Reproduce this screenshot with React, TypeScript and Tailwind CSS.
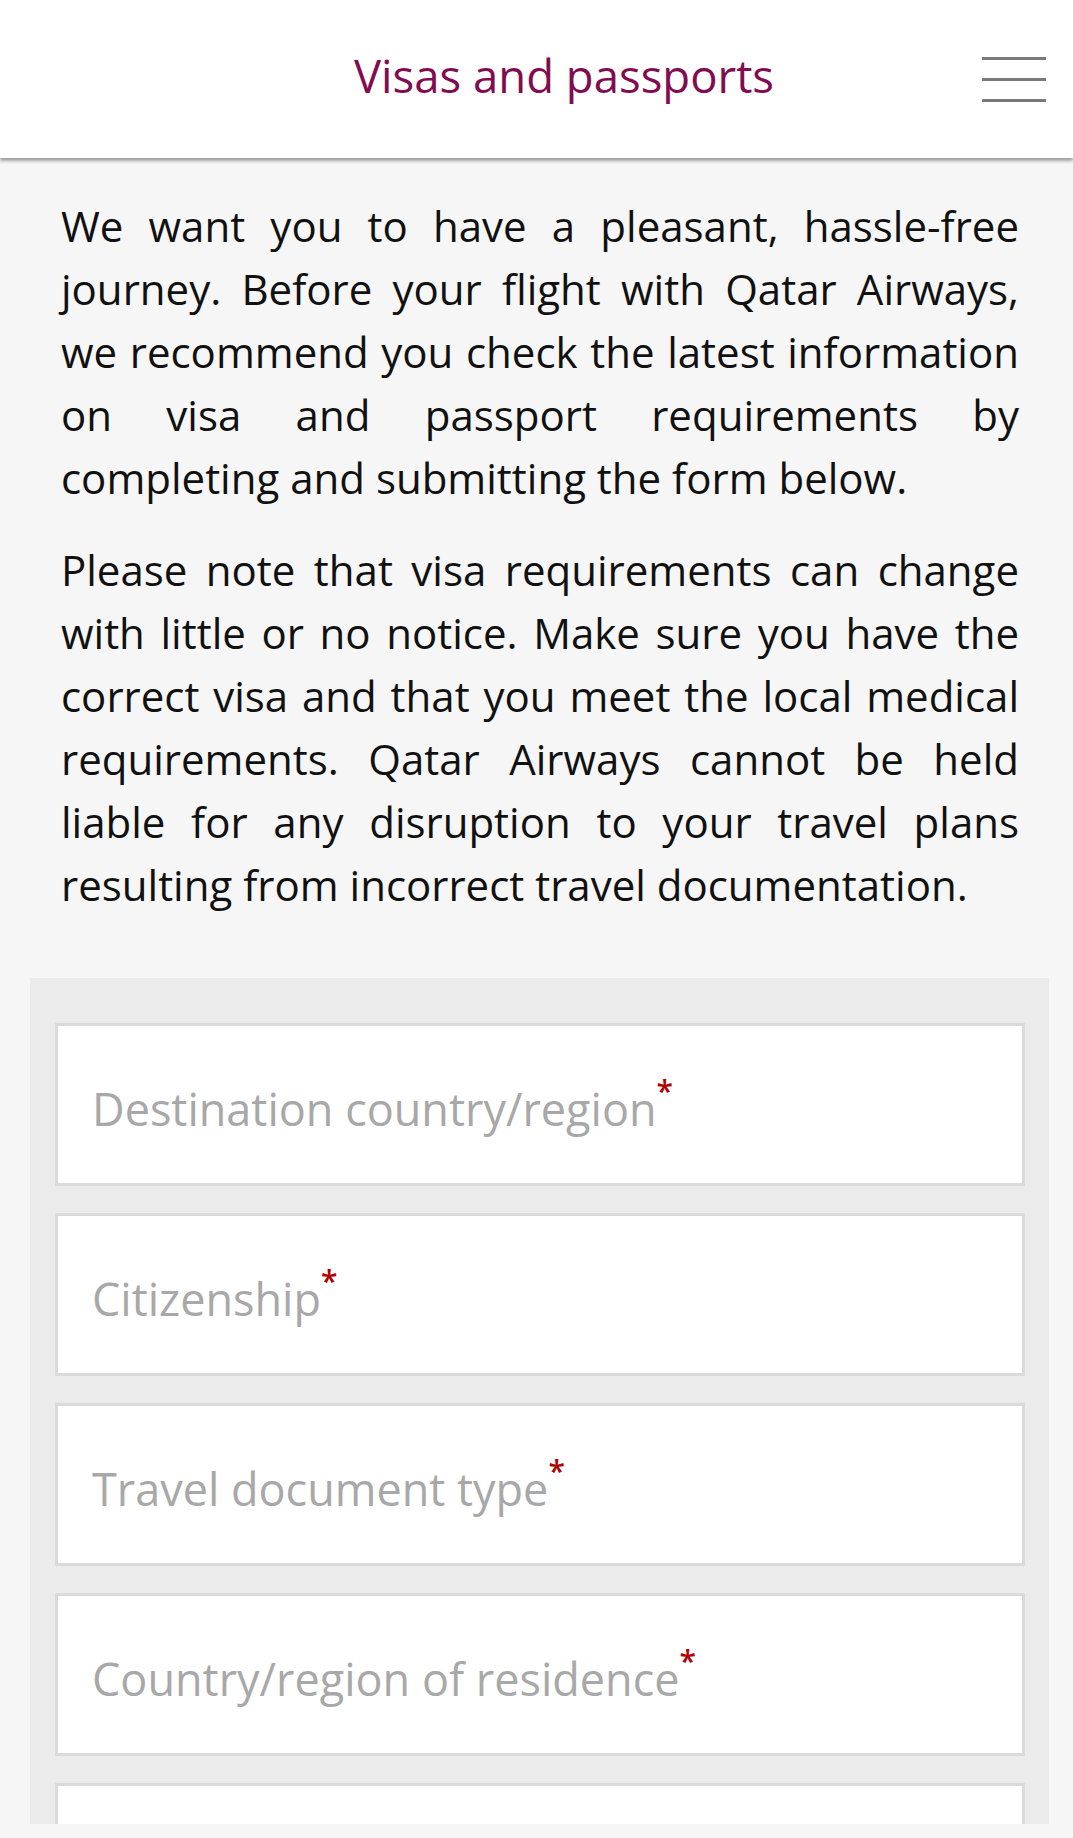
const fields = [
  "Destination country/region",
  "Citizenship",
  "Travel document type",
  "Country/region of residence",
  "",
];

export default function App() {
  return (
    <div className="w-[1073px] h-[1838px] bg-[#f6f6f6] flex flex-col overflow-hidden font-['Open_Sans',sans-serif]">
      {/* Header */}
      <header className="relative z-10 h-[158px] shrink-0 bg-white flex items-center shadow-[0_3px_3px_rgba(0,0,0,0.35)]">
        <h1 className="flex-1 pl-[146px] pb-[8px] text-center text-[45.5px] font-medium text-[#820c50]">
          Visas and passports
        </h1>
        <button className="mr-[27px] w-[64px] h-[45px] flex flex-col justify-between" aria-label="Menu">
          <span className="block h-[3px] w-full bg-[#7a7a7a]" />
          <span className="block h-[3px] w-full bg-[#7a7a7a]" />
          <span className="block h-[3px] w-full bg-[#7a7a7a]" />
        </button>
      </header>

      {/* Intro */}
      <div className="pl-[61px] pr-[54px] pt-[36px] text-[42px] leading-[63px] text-[#111] text-justify">
        <p>
          We want you to have a pleasant, hassle-free journey. Before your flight with Qatar Airways, we recommend
          you check the latest information on visa and passport requirements by completing and submitting the form
          below.
        </p>
        <p className="mt-[29px]">
          Please note that visa requirements can change with little or no notice. Make sure you have the correct
          visa and that you meet the local medical requirements. Qatar Airways cannot be held liable for any
          disruption to your travel plans resulting from incorrect travel documentation.
        </p>
      </div>

      {/* Form */}
      <section className="ml-[30px] mr-[24px] mt-[62px] flex-1 min-h-0 overflow-hidden bg-[#ebebeb] pl-[25px] pr-[24px] pt-[45px] flex flex-col gap-[27px]">
        {fields.map((label, i) => (
          <div
            key={i}
            className="h-[163px] shrink-0 bg-white border-[3px] border-[#dadada] flex items-center pl-[34px] pt-[8px]"
          >
            {label && (
              <span className="text-[45px] text-[#a8a8a8]">
                {label}
                <span className="text-[30px] leading-none text-[#b00000] font-semibold align-[24px]">*</span>
              </span>
            )}
          </div>
        ))}
      </section>
      <div className="h-[14px] shrink-0" />
    </div>
  );
}
